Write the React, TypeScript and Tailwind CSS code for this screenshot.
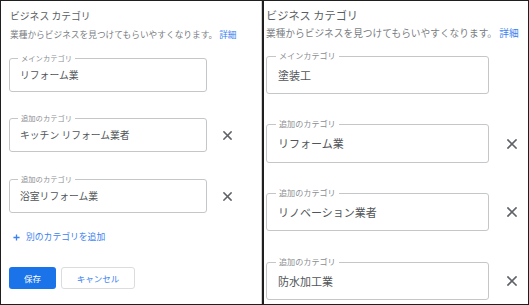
const jp = { fontFamily: '"Noto Sans CJK JP", "Noto Sans", sans-serif' };

function CloseIcon({ size }: { size: number }) {
  return (
    <svg width={size} height={size} viewBox="0 0 10 10" fill="none">
      <path d="M1 1L9 9M9 1L1 9" stroke="#5f6368" strokeWidth={1.7} strokeLinecap="square" />
    </svg>
  );
}

function Field({
  label,
  value,
  box,
  labelCls,
  valueCls,
}: {
  label: string;
  value: string;
  box: string;
  labelCls: string;
  valueCls: string;
}) {
  return (
    <div className={`relative flex items-center border border-[#c4c7c9] rounded-[3px] ${box}`}>
      <span className={`absolute bg-white px-[3px] text-[#8a8e92] leading-none ${labelCls}`}>{label}</span>
      <span className={`text-[#515558] whitespace-nowrap ${valueCls}`}>{value}</span>
    </div>
  );
}

function LeftPanel() {
  const fieldBox = 'w-[198px] h-[34px] pl-[10px]';
  const labelCls = 'left-[8px] -top-[4px] text-[7.3px]';
  const valueCls = 'text-[9.8px]';
  return (
    <div className="w-[261px] h-full border-r border-[#d3d3d3] pl-[8px] pt-[9px] flex flex-col">
      <div className="ml-px text-[9.8px] leading-[12px] text-[#5a5e62] whitespace-nowrap">ビジネス カテゴリ</div>
      <div className="ml-px mt-[7px] text-[8.7px] leading-[12px] text-[#7c8084] whitespace-nowrap">
        業種からビジネスを見つけてもらいやすくなります。 <span className="text-[#3b82f0]">詳細</span>
      </div>
      <div className="mt-[17px]">
        <Field label="メインカテゴリ" value="リフォーム業" box={fieldBox} labelCls={labelCls} valueCls={valueCls} />
      </div>
      <div className="mt-[26px] flex items-center">
        <Field label="追加のカテゴリ" value="キッチン リフォーム業者" box={fieldBox} labelCls={labelCls} valueCls={valueCls} />
        <div className="ml-[16px] flex">
          <CloseIcon size={9} />
        </div>
      </div>
      <div className="mt-[27px] flex items-center">
        <Field label="追加のカテゴリ" value="浴室リフォーム業" box={fieldBox} labelCls={labelCls} valueCls={valueCls} />
        <div className="ml-[16px] flex">
          <CloseIcon size={9} />
        </div>
      </div>
      <div className="mt-[18px] flex items-center h-[12px] pl-[4px]">
        <svg width="7" height="7" viewBox="0 0 8 8" fill="none">
          <path d="M4 0.5V7.5M0.5 4H7.5" stroke="#3b82f0" strokeWidth={1.5} />
        </svg>
        <span className="ml-[6px] text-[8.8px] text-[#3b82f0] whitespace-nowrap">別のカテゴリを追加</span>
      </div>
      <div className="mt-[24px] flex items-center gap-[5px]">
        <button className="w-[47px] h-[22px] rounded-[3px] bg-[#1a73e8] text-white text-[8.5px] flex items-center justify-center">
          保存
        </button>
        <button className="w-[74px] h-[22px] rounded-[3px] border border-[#dadce0] bg-white text-[#3b82f0] text-[8.5px] flex items-center justify-center">
          キャンセル
        </button>
      </div>
    </div>
  );
}

function RightPanel() {
  const labelCls = 'left-[9px] -top-[5px] text-[8.1px]';
  const valueCls = 'text-[11px]';
  const rows = [
    { value: 'リフォーム業', mt: 'mt-[30px]', h: 'h-[39px]' },
    { value: 'リノベーション業者', mt: 'mt-[30px]', h: 'h-[38px]' },
    { value: '防水加工業', mt: 'mt-[31px]', h: 'h-[38px]' },
  ];
  return (
    <div className="flex-1 h-full pl-[2px] pt-[7px] flex flex-col">
      <div className="text-[11.2px] leading-[14px] text-[#5a5e62] whitespace-nowrap">ビジネス カテゴリ</div>
      <div className="mt-[4px] text-[9.7px] leading-[14px] text-[#7c8084] whitespace-nowrap">
        業種からビジネスを見つけてもらいやすくなります。 <span className="text-[#3b82f0]">詳細</span>
      </div>
      <div className="mt-[16px]">
        <Field
          label="メインカテゴリ"
          value="塗装工"
          box="w-[223px] h-[38px] pl-[11px]"
          labelCls={labelCls}
          valueCls={valueCls}
        />
      </div>
      {rows.map((r) => (
        <div key={r.value} className={`${r.mt} flex items-center`}>
          <Field
            label="追加のカテゴリ"
            value={r.value}
            box={`w-[223px] ${r.h} pl-[11px]`}
            labelCls={labelCls}
            valueCls={valueCls}
          />
          <div className="ml-[18px] flex">
            <CloseIcon size={10} />
          </div>
        </div>
      ))}
    </div>
  );
}

export default function App() {
  return (
    <div style={jp} className="w-[529px] h-[305px] border border-[#1f1f1f] bg-white flex overflow-hidden">
      <LeftPanel />
      <div className="w-[2px] h-full bg-[#1f1f1f]" />
      <RightPanel />
    </div>
  );
}
